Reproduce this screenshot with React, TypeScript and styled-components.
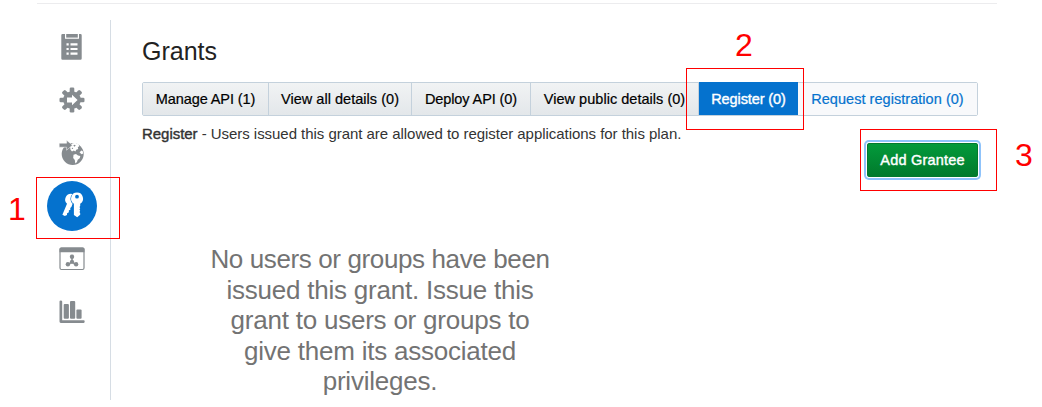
import React from "react";
import styled, { createGlobalStyle } from "styled-components";

const Global = createGlobalStyle`
  * { box-sizing: border-box; }
  body { margin: 0; background: #fff; font-family: "Liberation Sans", Arial, sans-serif; }
`;

const Page = styled.div`
  position: relative;
  width: 1042px;
  height: 407px;
  overflow: hidden;
  padding: 3px 0 0 37px;
`;
const TopRule = styled.div`
  width: 960px;
  height: 1px;
  background: #ececee;
`;
const Body = styled.div`
  display: flex;
  padding-top: 16px;
`;
const Sidebar = styled.nav`
  width: 74px;
  height: 380px;
  border-right: 1px solid #d6dde4;
  display: flex;
  flex-direction: column;
  gap: 3.2px;
  padding: 1.500px 0 0 10px;
`;
const NavItem = styled.a<{ $active?: boolean }>`
  width: 50px;
  height: 50px;
  flex: none;
  border-radius: 50%;
  display: flex;
  align-items: center;
  justify-content: center;
  color: ${(p) => (p.$active ? "#fff" : "#868b8f")};
  background: ${(p) => (p.$active ? "#0572ce" : "transparent")};
`;
const Main = styled.main`
  width: 836px;
  margin-left: 31px;
  display: flex;
  flex-direction: column;
`;
const Title = styled.h1`
  margin: 16px 0 0;
  font-size: 25px;
  line-height: 30px;
  font-weight: 400;
  color: #222;
`;
const Tabs = styled.div`
  display: flex;
  margin-top: 16px;
  height: 34px;
  border: 1px solid #c4d1dc;
  border-radius: 2px;
`;
const Tab = styled.button<{ $w: number; $kind?: "on" | "link"; $track?: number }>`
  width: ${(p) => p.$w}px;
  flex: none;
  margin: ${(p) => (p.$kind === "on" ? "-1px 0 0" : "0")};
  padding: 0;
  border: 0;
  border-right: ${(p) => (p.$kind ? "0" : "1px solid #c4d1dc")};
  background: ${(p) =>
    p.$kind === "on" ? "#0572ce" : p.$kind === "link" ? "#f8f9fb" : "linear-gradient(#f1f3f4, #e3e7ea)"};
  color: ${(p) => (p.$kind === "on" ? "#fff" : p.$kind === "link" ? "#0572ce" : "#000")};
  font: 14.5px "Liberation Sans", Arial, sans-serif;
  letter-spacing: ${(p) => p.$track ?? -0.1}px;
  white-space: nowrap;
  -webkit-text-stroke: ${(p) => (p.$kind === "on" ? "0.4px" : "0.2px")} currentColor;
`;
const Note = styled.p`
  margin: 9px 0 0;
  font-size: 15px;
  line-height: 18px;
  letter-spacing: -0.04px;
  color: #333;
  white-space: nowrap;
`;
const Strong = styled.span`
  -webkit-text-stroke: 0.4px currentColor;
`;
const Actions = styled.div`
  display: flex;
  justify-content: flex-end;
`;
const AddButton = styled.button`
  width: 111px;
  height: 34px;
  padding: 0;
  border: 1px solid #027a2e;
  border-radius: 2px;
  background: linear-gradient(#039a3b, #017a2c);
  color: #fff;
  font: 14.5px "Liberation Sans", Arial, sans-serif;
  letter-spacing: 0.2px;
  -webkit-text-stroke: 0.4px currentColor;
  box-shadow: 0 0 0 1px #fff, 0 0 0 3px #8fc3fb;
`;
const Empty = styled.p`
  margin: 67px 0 0 58px;
  width: 360px;
  text-align: center;
  font-size: 26px;
  line-height: 30.5px;
  letter-spacing: -0.22px;
  color: #737373;
  white-space: nowrap;
  &::first-line { letter-spacing: -0.38px; }
`;
const Callout = styled.div<{ $x: number; $y: number; $w: number; $h: number }>`
  position: absolute;
  left: ${(p) => p.$x}px;
  top: ${(p) => p.$y}px;
  width: ${(p) => p.$w}px;
  height: ${(p) => p.$h}px;
  border: 1px solid #f00;
`;
const Digit = styled.span<{ $x: number; $y: number }>`
  position: absolute;
  left: ${(p) => p.$x}px;
  top: ${(p) => p.$y}px;
  font-size: 32px;
  line-height: 36px;
  color: #f00;
`;

const Clipboard = () => (
  <svg width="26" height="28" viewBox="0 0 26 28" fill="currentColor">
    <path d="M3.500 1H6v4.800h14V1h1.500q1.200 0 1.200 1.200v23.300q0 1.200-1.200 1.200H3.500q-1.200 0-1.200-1.200V2.200Q2.300 1 3.500 1z" />
    <path d="M7.200 1h11.600v3.600H7.200z" />
    <path fill="#fff" d="M7.500 10.200h2.200v2.200H7.500zM11.500 10.200h7v2.200h-7zM7.500 14.900h2.200v2.200H7.500zM11.500 14.900h7v2.200h-7zM7.500 19.600h2.200v2.200H7.500zM11.500 19.600h7v2.200h-7z" />
  </svg>
);
const Gear = () => (
  <svg width="26" height="26" viewBox="-13 -13 26 26" fill="currentColor">
    {[0, 45, 90, 135, 180, 225, 270, 315].map((a) => (
      <rect key={a} x="-2.300" y="-12.500" width="4.600" height="6" rx="1.300" transform={`rotate(${a})`} />
    ))}
    <circle r="8.800" />
    <path fill="#fff" d="M-5-2.500H0V-5.200L5.600 0 0 5.200V2.500H-5z" />
  </svg>
);
const Globe = () => (
  <svg width="26" height="26" viewBox="0 0 26 26">
    <circle cx="13.700" cy="14" r="11" fill="currentColor" />
    <path fill="#fff" d="M11 6l2-2.500 3-.7 3.800 1.600.4 2-1.400.6.400 2-2 .8-.8 1.800-1.600-1.200-1.800 1-1.500-1.600z" />
    <path fill="#fff" d="M14.500 14.800l2.500-.8 2 1.400 2.300.5-.6 2.300-2 1.500-.7 2.300-1.700 1.500-.5-3.400-1.600-2.200z" />
    <path fill="#fff" d="M20.500 12.300l2-1.700 1.200.4.500 2.600-1.700.6z" />
    <path fill="currentColor" d="M14.200 5.400l1.600-.7.900.9-1.200 1.100zM12.600 8l1.300-.3.300 1-1 .4z" />
    <path fill="currentColor" stroke="#fff" strokeWidth=".5" d="M.2 3.200h7.400V.2l5.800 5-5.800 5v-3H.2z" />
  </svg>
);
const Keys = () => (
  <svg width="26" height="30" viewBox="0 0 26 30" fill="currentColor">
    <path d="M6.800 5.900a6 6 0 0 1 6.600-2.900q-2.200 2-2 5 .2 2.900 2.200 4.800l-1.200 3.200-1.200 1 .3 1.500-1.700 1 .1 1.700-1.800 1-.1 1.700-2.200 1.200-2.400-1.400 4.600-10.900a6 6 0 0 1-1.200-6.900z" />
    <path fillRule="evenodd" d="M18 1.600a6 6 0 0 1 3.200 11.100v2.300l-.7 1 .7 1.200-.7 1.200.7 1.300-.7 1.300.7 1.200v1.500L18.200 26.200l-3.300-2.200v-11.300A6 6 0 0 1 18 1.600zm0 2.200a1.900 1.900 0 1 0 0 3.800 1.900 1.900 0 0 0 0-3.800z" />
  </svg>
);
const Portal = () => (
  <svg width="26" height="24" viewBox="0 0 26 24" fill="currentColor">
    <rect x="1" y="1" width="24" height="21.500" rx="1.500" fill="none" stroke="currentColor" strokeWidth="1.200" />
    <path d="M.5 2Q.5.4 2 .4h22q1.500 0 1.500 1.600v3.300H.5z" />
    <path d="M13 10v5.200M13 15.200L9 17.500M13 15.200l4 2.300" stroke="currentColor" strokeWidth="1.500" />
    <circle cx="13" cy="9.800" r="2.200" /><circle cx="13" cy="14.800" r="2.100" />
    <circle cx="8.900" cy="17.200" r="2.200" /><circle cx="17.100" cy="17.200" r="2.200" />
  </svg>
);
const Chart = () => (
  <svg width="26" height="24" viewBox="0 0 26 24" fill="currentColor">
    <path d="M.5 1.500q0-1 1.300-1t1.400 1v18.800h21.500q1 0 1 1.300t-1 1.400H1.800q-1.300 0-1.300-1.400z" />
    <rect x="4.700" y="4" width="5.200" height="14.800" rx="1" />
    <rect x="11" y="1" width="5.200" height="17.800" rx="1" />
    <rect x="17.400" y="9.400" width="5.200" height="9.400" rx="1" />
  </svg>
);

export default function App() {
  return (
    <Page>
      <Global />
      <TopRule />
      <Body>
        <Sidebar>
          <NavItem><Clipboard /></NavItem>
          <NavItem><Gear /></NavItem>
          <NavItem><Globe /></NavItem>
          <NavItem $active><Keys /></NavItem>
          <NavItem><Portal /></NavItem>
          <NavItem><Chart /></NavItem>
        </Sidebar>
        <Main>
          <Title>Grants</Title>
          <Tabs>
            <Tab $w={126}>Manage API (1)</Tab>
            <Tab $w={143} $track={0.03}>View all details (0)</Tab>
            <Tab $w={119}>Deploy API (0)</Tab>
            <Tab $w={168} $track={0.03}>View public details (0)</Tab>
            <Tab $w={99} $kind="on">Register (0)</Tab>
            <Tab $w={179} $kind="link" $track={0.04}>Request registration (0)</Tab>
          </Tabs>
          <Note><Strong>Register</Strong> - Users issued this grant are allowed to register applications for this plan.</Note>
          <Actions><AddButton>Add Grantee</AddButton></Actions>
          <Empty>
            No users or groups have been<br />issued this grant. Issue this<br />grant to users or groups to<br />give them its associated<br />privileges.
          </Empty>
        </Main>
      </Body>
      <Callout $x={36} $y={177} $w={84} $h={62} />
      <Callout $x={686} $y={68} $w={118} $h={62} />
      <Callout $x={860} $y={129} $w={137} $h={62} />
      <Digit $x={8} $y={191}>1</Digit>
      <Digit $x={735} $y={27}>2</Digit>
      <Digit $x={1015} $y={137}>3</Digit>
    </Page>
  );
}
